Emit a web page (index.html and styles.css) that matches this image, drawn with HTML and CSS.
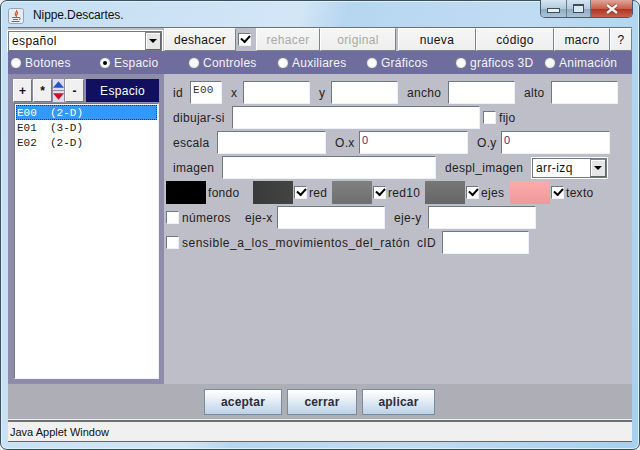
FILE: index.html
```html
<!DOCTYPE html>
<html lang="es">
<head>
<meta charset="utf-8">
<title>Nippe.Descartes.</title>
<link rel="stylesheet" href="styles.css">
</head>
<body>
<div class="window">
  <header class="titlebar">
    <svg class="java" width="16" height="16" viewBox="0 0 16 16"><rect x=".5" y=".5" width="15" height="15" rx="2" fill="#e6edf4" stroke="#97a4b0"/><path d="M8.500 2c1.200 1.800-2.200 2.800-1.200 4.800.3.600.9 1.200.9 1.200-.3-1.200 2.300-2 1.100-4.200" fill="none" stroke="#e0531f" stroke-width="1.200"/><path d="M4 9.500h7M5 11.500h5M3.500 13.500h8" stroke="#4f74a8" stroke-width="1"/><path d="M11 9.500c1.800 0 1.800 2 0 2" fill="none" stroke="#4f74a8"/></svg>
    <span class="title">Nippe.Descartes.</span>
    <div class="controls">
      <span class="ctl"><i class="min"></i></span>
      <span class="ctl narrow"><i class="max"></i></span>
      <span class="ctl close"><svg width="16" height="12" viewBox="0 0 16 12"><path d="M3 2l10 8M13 2L3 10" stroke="#7a3a30" stroke-width="3.600"/><path d="M3 2l10 8M13 2L3 10" stroke="#f6f4f2" stroke-width="2.400"/></svg></span>
    </div>
  </header>

  <div class="client">
    <div class="toolbar">
      <div class="combo main-combo"><span class="combo-text">español</span><span class="arrow"><i></i></span></div>
      <button class="btn w72">deshacer</button>
      <span class="tool-check"><span class="check on"></span></span>
      <button class="btn w64 off">rehacer</button>
      <button class="btn w76 off">original</button>
      <button class="btn w78 gap">nueva</button>
      <button class="btn w78">código</button>
      <button class="btn w56">macro</button>
      <button class="btn b22">?</button>
    </div>

    <div class="tabs">
      <label class="tab t89"><span class="radio"></span>Botones</label>
      <label class="tab t89"><span class="radio on"></span>Espacio</label>
      <label class="tab t89"><span class="radio"></span>Controles</label>
      <label class="tab t89"><span class="radio"></span>Auxiliares</label>
      <label class="tab t89"><span class="radio"></span>Gráficos</label>
      <label class="tab t89"><span class="radio"></span>gráficos 3D</label>
      <label class="tab"><span class="radio"></span>Animación</label>
    </div>

    <div class="main">
      <aside class="side">
        <div class="side-head">
          <button class="mini first">+</button>
          <button class="mini">*</button>
          <span class="updown">
            <span class="ud"><svg width="12" height="7" viewBox="0 0 12 7"><path d="M6 0l6 7H0z" fill="#2a52c8"/></svg></span>
            <span class="ud"><svg width="12" height="7" viewBox="0 0 12 7"><path d="M6 7L0 0h12z" fill="#d0102a"/></svg></span>
          </span>
          <button class="mini">-</button>
          <span class="side-title">Espacio</span>
        </div>
        <ul class="list">
          <li class="sel">E00  (2-D)</li>
          <li>E01  (3-D)</li>
          <li>E02  (2-D)</li>
        </ul>
      </aside>

      <section class="form">
        <div class="row">
          <span class="lb w17">id</span><span class="field f32 mono">E00</span>
          <span class="lb p21">x</span><span class="field f67"></span>
          <span class="lb p21">y</span><span class="field f67"></span>
          <span class="lb p50">ancho</span><span class="field f67"></span>
          <span class="lb p36">alto</span><span class="field f67"></span>
        </div>
        <div class="row">
          <span class="lb w59">dibujar-si</span><span class="field f248"></span>
          <span class="check mark-gap"></span><span class="lb">fijo</span>
        </div>
        <div class="row">
          <span class="lb w44">escala</span><span class="field f109"></span>
          <span class="lb p33">O.x</span><span class="field f109 zero">0</span>
          <span class="lb p33">O.y</span><span class="field f109 zero">0</span>
        </div>
        <div class="row">
          <span class="lb w49">imagen</span><span class="field f214"></span>
          <span class="lb p96">despl_imagen</span>
          <div class="combo small"><span class="combo-text">arr-izq</span><span class="arrow"><i></i></span></div>
        </div>
        <div class="row colors">
          <span class="swatch black"></span><span class="lb w45">fondo</span>
          <span class="swatch dark"></span><span class="check on"></span><span class="lb w23">red</span>
          <span class="swatch mid"></span><span class="check on"></span><span class="lb w37">red10</span>
          <span class="swatch mid2"></span><span class="check on"></span><span class="lb w29">ejes</span>
          <span class="swatch pink"></span><span class="check on"></span><span class="lb">texto</span>
        </div>
        <div class="row colors">
          <span class="check"></span><span class="lb w63">números</span><span class="lb w32">eje-x</span><span class="field f108"></span>
          <span class="lb p43">eje-y</span><span class="field f108"></span>
        </div>
        <div class="row colors">
          <span class="check"></span><span class="lb w235 wide">sensible_a_los_movimientos_del_ratón</span><span class="lb w25">cID</span><span class="field f87"></span>
        </div>
      </section>
    </div>

    <footer class="actions">
      <button class="action w78">aceptar</button>
      <button class="action w70">cerrar</button>
      <button class="action w73">aplicar</button>
    </footer>
    <div class="status">Java Applet Window</div>
  </div>
</div>
</body>
</html>
```
FILE: styles.css
```css
* { box-sizing: border-box; }
html, body { margin: 0; padding: 0; background: #e8eef2; }
body { width: 640px; height: 450px; overflow: hidden; font: 12px "Liberation Sans", Arial, sans-serif; color: #222; }
button { font: inherit; padding: 0; margin: 0; color: #111; }

.window {
  width: 640px; height: 450px; padding: 0 7px 7px 7px;
  border: 1px solid #3a5060; border-radius: 7px;
  box-shadow: inset 0 0 0 1px #dff2fb;
  background: linear-gradient(105deg, #c4def3 0, #d2e6f6 40%, #b6d6f0 46%, #c0dcf2 70%, #a6d0ee 100%);
  display: flex; flex-direction: column;
}
.titlebar { height: 26px; flex: none; display: flex; align-items: flex-start; }
.java { margin-top: 7px; flex: none; }
.title { margin: 6px 0 0 9px; font: 12px/16px "Liberation Sans", Arial, sans-serif; letter-spacing: -.1px; color: #111; }
.controls { margin: -1px -1px 0 auto; display: flex; height: 18px; border: 1px solid #4c5a68; border-top: 0; border-radius: 0 0 5px 5px; overflow: hidden; }
.ctl { width: 26px; height: 17px; display: flex; align-items: center; justify-content: center; border-right: 1px solid #6a7a88; background: linear-gradient(#d6e6f2, #b3cadd 50%, #8fa9bf 51%, #a9c4da); }
.ctl.narrow { width: 24px; }
.ctl.close { width: 41px; border: 0; background: linear-gradient(#dfa79a, #c9604a 50%, #b03020 51%, #c4624c); }
.min { display: block; width: 13px; height: 5px; margin-top: 4px; border: 1px solid #3e4d5a; background: #e8f0f6; }
.max { display: block; width: 11px; height: 9px; border: 1px solid #3e4d5a; border-top-width: 2px; background: #dbe8f2; }

.client { width: 624px; height: 415px; display: flex; flex-direction: column; background: #aeaeb6; }

.toolbar { height: 24px; flex: none; display: flex; background: #bebec8; border-top: 1px solid #6b7075; }
.combo { display: flex; background: #fff; border: 1px solid #6d7a86; outline: 1px solid #fff; align-items: center; color: #111; }
.combo-text { flex: 1; padding-left: 3px; letter-spacing: .4px; }
.arrow { width: 16px; height: 100%; background: #e6e6e6; border: 1px solid #888; border-right-color: #666; border-bottom-color: #666; box-shadow: inset 1px 1px 0 #fff; display: flex; align-items: center; justify-content: center; }
.arrow i { width: 0; height: 0; border: 4px solid transparent; border-top: 4px solid #000; border-bottom: 0; }
.main-combo { width: 154px; height: 20px; margin: 3px 2px 0 0; }
.btn { height: 23px; flex: none; background: linear-gradient(#f6f6f6, #eee); border: 1px solid; border-color: #fff #79848c #79848c #fff; letter-spacing: .35px; }
.btn.off { color: #a9a9a9; }
.gap { margin-left: 2px; }
.w72 { width: 72px; }
.w64 { width: 64px; }
.w76 { width: 76px; }
.w78 { width: 78px; }
.w56 { width: 56px; }
.b22 { width: 22px; }
.w70 { width: 70px; }
.w73 { width: 73px; }
.tool-check { width: 20px; flex: none; display: flex; align-items: center; padding-left: 2px; }
.check { display: block; flex: none; width: 13px; height: 13px; background: #fff; border: 1px solid #6d7a86; border-right-color: #eef; border-bottom-color: #eef; position: relative; }
.check.on::after { content: ""; position: absolute; left: 2px; top: 1px; width: 7px; height: 4px; border-left: 2px solid #000; border-bottom: 2px solid #000; transform: rotate(-48deg); }

.tabs { height: 23px; flex: none; display: flex; align-items: center; padding-left: 2px; background: #6f6d9e; color: #f4f4f8; letter-spacing: .25px; }
.tab { display: flex; align-items: center; flex: none; gap: 3px; }
.t89 { width: 89px; }
.radio { width: 12px; height: 12px; border-radius: 50%; border: 1px solid #77768f; flex: none; display: flex; align-items: center; justify-content: center; background: radial-gradient(#fff 40%, #d4d4d8); }
.radio.on::after { content: ""; width: 4px; height: 4px; border-radius: 50%; background: #000; }

.main { height: 310px; flex: none; display: flex; }
.side { width: 156px; flex: none; background: #8e8ca8; padding: 5px; display: flex; flex-direction: column; }
.side-head { display: flex; height: 23px; flex: none; gap: 1px; }
.mini { width: 19px; height: 23px; background: #f0f0f0; border: 1px solid; border-color: #fff #777 #777 #fff; font-size: 12px; font-weight: bold; }
.updown { width: 11px; display: flex; flex-direction: column; gap: 1px; }
.ud { height: 11px; background: #dcdcea; display: flex; align-items: center; justify-content: center; overflow: hidden; }
.side-title { margin-left: 1px; width: 73px; background: #10105f; color: #fff; display: flex; align-items: center; justify-content: center; letter-spacing: .3px; }
.list { list-style: none; margin: 1px 0 0 1px; padding: 1px; width: 145px; flex: 1; background: #fff; border: 1px solid #6d7a86; border-right-color: #eef; border-bottom-color: #eef; font: 11px/17px "Liberation Mono", monospace; color: #222; }
.list li { height: 15px; padding-left: 1px; white-space: pre; }
.list .sel { background: #3399ff; color: #fff; outline: 1px dotted #333; outline-offset: -1px; }

.form { flex: 1; background: #bebec8; padding: 7px 0 0 2px; display: flex; flex-direction: column; gap: 2px; }
.row { height: 23px; flex: none; display: flex; align-items: center; padding-left: 7px; letter-spacing: .3px; }
.row.colors { padding-left: 0; }
.lb { flex: none; white-space: nowrap; color: #222; }
.wide { letter-spacing: .5px; }
.field { flex: none; height: 23px; background: #fff; border: 1px solid #6d7a86; border-right-color: #eef; border-bottom-color: #eef; padding: 2px; font-size: 11px; color: #5a2a5a; }
.mono { padding-top: 1px; font: 11px/14px "Liberation Mono", monospace; color: #333; }
.w17 { width: 17px; } .w23 { width: 23px; } .w25 { width: 25px; }
.w29 { width: 29px; } .w32 { width: 32px; } .w37 { width: 37px; }
.w44 { width: 44px; } .w45 { width: 45px; } .w49 { width: 49px; }
.w59 { width: 59px; } .w63 { width: 63px; } .w235 { width: 235px; }
.p21, .p33, .p36, .p43, .p50, .p96 { padding-left: 9px; }
.p21 { width: 21px; } .p33 { width: 33px; } .p36 { width: 36px; }
.p43 { width: 43px; } .p50 { width: 50px; } .p96 { width: 96px; }
.f32 { width: 32px; } .f67 { width: 67px; } .f248 { width: 248px; }
.f109 { width: 109px; } .f214 { width: 214px; } .f108 { width: 108px; } .f87 { width: 87px; }
.mark-gap { margin: 0 3px; }
.small { width: 75px; height: 20px; }
.swatch { flex: none; width: 40px; height: 23px; margin-right: 1px; }
.black { background: #000; margin-right: 2px; }
.dark { background: linear-gradient(90deg, #3a3a3a, #444); }
.mid { background: linear-gradient(#808080, #6f6f6f); }
.mid2 { background: linear-gradient(#777, #666); }
.pink { background: linear-gradient(#ffaaaa, #ee9a9a); }
.colors .check { margin-right: 3px; }
.colors .swatch + .check { margin-right: 2px; }

.actions { height: 36px; flex: none; display: flex; align-items: center; padding-left: 196px; gap: 5px; background: #aeaeb6; }
.action { height: 26px; background: linear-gradient(#fff, #eef3f8 30%, #bcd2e8); border: 1px solid #7a8b9a; font-weight: bold; letter-spacing: .2px; color: #2c2c3c; }
.status { height: 22px; flex: none; background: #f0f0f0; border-top: 2px solid #707070; box-shadow: 0 -1px 0 #eee; border-bottom: 1px solid #666; font-size: 11px; line-height: 21px; padding-left: 2px; color: #111; }
```
